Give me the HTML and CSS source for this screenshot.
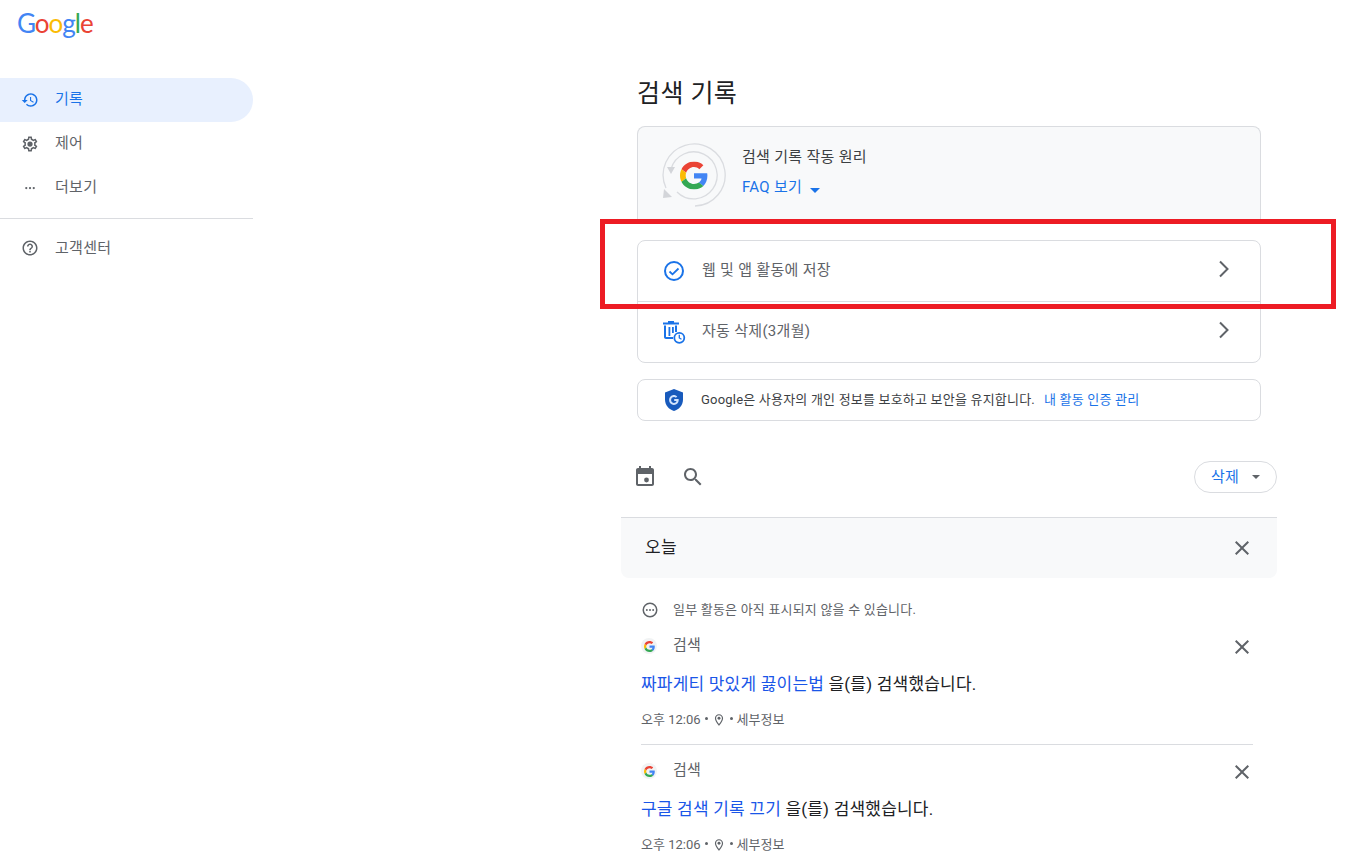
FILE: index.html
```html
<!DOCTYPE html>
<html lang="ko">
<head>
  <meta charset="UTF-8">
  <title>검색 기록</title>
  <link rel="stylesheet" href="styles.css">
</head>
<body>
  <svg class="defs" width="0" height="0">
    <symbol id="g-logo" viewBox="0 0 48 48">
      <path fill="#EA4335" d="M24 9.5c3.54 0 6.71 1.22 9.21 3.6l6.85-6.85C35.9 2.38 30.47 0 24 0 14.62 0 6.51 5.38 2.56 13.22l7.98 6.19C12.43 13.72 17.74 9.5 24 9.5z"/>
      <path fill="#4285F4" d="M46.98 24.55c0-1.57-.15-3.09-.38-4.55H24v9.02h12.94c-.58 2.96-2.26 5.48-4.78 7.18l7.73 6c4.51-4.18 7.09-10.36 7.09-17.65z"/>
      <path fill="#FBBC05" d="M10.53 28.59c-.48-1.45-.76-2.99-.76-4.59s.27-3.14.76-4.59l-7.98-6.19C.92 16.46 0 20.12 0 24c0 3.88.92 7.54 2.56 10.78l7.97-6.19z"/>
      <path fill="#34A853" d="M24 48c6.48 0 11.93-2.13 16.08-5.81l-7.73-6c-2.15 1.45-4.92 2.3-8.35 2.3-6.26 0-11.57-4.22-13.47-9.91l-7.98 6.19C6.51 42.62 14.62 48 24 48z"/>
    </symbol>
    <symbol id="close" viewBox="0 0 24 24">
      <path d="M19 6.41L17.59 5 12 10.59 6.41 5 5 6.41 10.59 12 5 17.59 6.41 19 12 13.41 17.59 19 19 17.59 13.41 12z"/>
    </symbol>
    <symbol id="chevron" viewBox="0 0 24 24">
      <path d="M8 4.500L15.500 12 8 19.500" fill="none" stroke="currentColor" stroke-width="2"/>
    </symbol>
    <symbol id="pin" viewBox="0 0 24 24">
      <path d="M12 2C8.100 2 5 5.100 5 9c0 5.200 7 13 7 13s7-7.800 7-13c0-3.900-3.100-7-7-7zm0 17c-2-2.600-5-7-5-10 0-2.800 2.200-5 5-5s5 2.200 5 5c0 2.900-2.900 7.400-5 10z"/>
      <circle cx="12" cy="9" r="2.500"/>
    </symbol>
  </svg>

  <div class="page">
    <aside class="side">
      <div class="logo"><span class="c-blue">G</span><span class="c-red">o</span><span class="c-yellow">o</span><span class="c-blue">g</span><span class="c-green">l</span><span class="c-red">e</span></div>
      <nav class="nav">
        <a class="nav-item active">
          <svg class="nav-icon" viewBox="0 0 24 24"><path d="M13 3c-4.970 0-9 4.030-9 9H1l3.890 3.890.07.14L9 12H6c0-3.870 3.130-7 7-7s7 3.130 7 7-3.130 7-7 7c-1.930 0-3.680-.79-4.940-2.060l-1.420 1.420C8.270 19.990 10.510 21 13 21c4.970 0 9-4.030 9-9s-4.030-9-9-9zm-1 5v5l4.280 2.540.72-1.210-3.500-2.080V8H12z"/></svg>
          <span class="nav-label">기록</span>
        </a>
        <a class="nav-item">
          <svg class="nav-icon" viewBox="0 0 24 24"><path d="M19.430 12.980c.04-.32.07-.64.07-.98 0-.34-.03-.66-.07-.98l2.110-1.650c.19-.15.24-.42.12-.64l-2-3.460c-.09-.16-.26-.25-.44-.25-.06 0-.12.01-.17.03l-2.490 1c-.52-.4-1.080-.73-1.690-.98l-.38-2.650C14.460 2.180 14.250 2 14 2h-4c-.25 0-.46.18-.49.42l-.38 2.650c-.61.25-1.170.59-1.690.98l-2.490-1c-.06-.02-.12-.03-.18-.03-.17 0-.34.09-.43.25l-2 3.460c-.13.22-.07.49.12.64l2.110 1.650c-.04.32-.07.65-.07.98 0 .33.03.66.07.98l-2.110 1.650c-.19.15-.24.42-.12.64l2 3.460c.09.16.26.25.44.25.06 0 .12-.01.17-.03l2.490-1c.52.4 1.080.73 1.690.98l.38 2.650c.03.24.24.42.49.42h4c.25 0 .46-.18.49-.42l.38-2.650c.61-.25 1.170-.59 1.690-.98l2.490 1c.06.02.12.03.18.03.17 0 .34-.09.43-.25l2-3.460c.12-.22.07-.49-.12-.64l-2.110-1.650zm-1.980-1.710c.04.31.05.52.05.73 0 .21-.02.43-.05.73l-.14 1.130.89.7 1.080.84-.7 1.210-1.270-.51-1.040-.42-.9.68c-.43.32-.84.56-1.250.73l-1.060.43-.16 1.130-.2 1.350h-1.400l-.19-1.350-.16-1.130-1.060-.43c-.43-.18-.83-.41-1.230-.71l-.91-.7-1.060.43-1.270.51-.7-1.210 1.080-.84.89-.7-.14-1.130c-.03-.31-.05-.54-.05-.74s.02-.43.05-.73l.14-1.130-.89-.7-1.080-.84.7-1.210 1.270.51 1.040.42.9-.68c.43-.32.84-.56 1.250-.73l1.060-.43.16-1.130.2-1.350h1.390l.19 1.350.16 1.130 1.060.43c.43.18.83.41 1.230.71l.91.7 1.060-.43 1.270-.51.7 1.210-1.070.85-.89.7.14 1.130z"/><circle cx="12" cy="12" r="3.500"/></svg>
          <span class="nav-label">제어</span>
        </a>
        <a class="nav-item">
          <svg class="nav-icon" viewBox="0 0 24 24"><circle cx="7" cy="12" r="1.500"/><circle cx="12" cy="12" r="1.500"/><circle cx="17" cy="12" r="1.500"/></svg>
          <span class="nav-label">더보기</span>
        </a>
        <div class="nav-line"></div>
        <a class="nav-item">
          <svg class="nav-icon" viewBox="0 0 24 24"><path d="M11 18h2v-2h-2v2zm1-16C6.480 2 2 6.480 2 12s4.480 10 10 10 10-4.480 10-10S17.520 2 12 2zm0 18c-4.410 0-8-3.590-8-8s3.590-8 8-8 8 3.590 8 8-3.590 8-8 8zm0-14c-2.210 0-4 1.790-4 4h2c0-1.100.9-2 2-2s2 .9 2 2c0 2-3 1.750-3 5h2c0-2.250 3-2.500 3-5 0-2.210-1.790-4-4-4z"/></svg>
          <span class="nav-label help-label">고객센터</span>
        </a>
      </nav>
    </aside>

    <main class="main">
      <h1 class="title">검색 기록</h1>

      <div class="cards">
        <section class="how">
          <svg class="how-icon" viewBox="0 0 66 66">
            <path d="M34 63A31 31 0 1 0 5 45" fill="none" stroke="#dadce0" stroke-width="1.300"/>
            <path d="M16 49A23.500 23.500 0 1 0 10 26" fill="none" stroke="#dadce0" stroke-width="1.300"/>
            <path d="M6 24h8l-4 7zM3 46l8 8-9 1z" fill="#d3d5d9"/>
            <use href="#g-logo" x="19" y="18.500" width="28" height="28"/>
          </svg>
          <div class="how-text">
            <div class="how-title">검색 기록 작동 원리</div>
            <div class="how-link">FAQ 보기 <span class="caret"></span></div>
          </div>
        </section>

        <section class="rows">
          <div class="row">
            <svg class="row-icon" viewBox="0 0 24 24"><circle cx="12" cy="12" r="9" fill="none" stroke="#1a73e8" stroke-width="2"/><path d="M7.500 12.500l3 2.800 6-5.800" fill="none" stroke="#1a73e8" stroke-width="1.800"/></svg>
            <span class="row-text">웹 및 앱 활동에 저장</span>
            <svg class="row-arrow"><use href="#chevron"/></svg>
          </div>
          <div class="row">
            <svg class="row-icon" viewBox="0 0 24 24">
              <path d="M6 1h6v1.500h5v2H1v-2h5zM2 5.500h2V17h7v2H4c-1.100 0-2-.9-2-2zM15 5.500h-2V12h2zM6.500 7H8.300v9H6.500zM10 7h1.800v6H10z" fill="#1a73e8"/>
              <circle cx="17.300" cy="17.800" r="5" fill="#fff" stroke="#1a73e8" stroke-width="1.800"/>
              <path d="M17.300 14.800v3.200l2.200 1.300" fill="none" stroke="#1a73e8" stroke-width="1.300"/>
            </svg>
            <span class="row-text">자동 삭제(3개월)</span>
            <svg class="row-arrow"><use href="#chevron"/></svg>
          </div>
        </section>

        <section class="safe">
          <svg class="safe-icon" viewBox="0 0 24 24">
            <path d="M12 1l9 3.500v7c0 5.500-3.800 10-9 11.500-5.200-1.500-9-6-9-11.500v-7z" fill="#185abc"/>
            <path d="M16.500 11h-4.300v2h2.300c-.3 1.200-1.300 1.900-2.500 1.900-1.600 0-2.900-1.300-2.900-2.900s1.300-2.900 2.900-2.900c.8 0 1.400.3 1.900.7l1.400-1.400C13.500 7.600 12.800 7.100 12 7.100c-2.700 0-4.900 2.200-4.900 4.900s2.200 4.900 4.900 4.900 4.700-2 4.700-4.700c0-.4 0-.8-.2-1.200z" fill="#d2e3fc"/>
          </svg>
          <span class="safe-text">Google은 사용자의 개인 정보를 보호하고 보안을 유지합니다.</span>
          <a class="safe-link">내 활동 인증 관리</a>
        </section>
      </div>

      <div class="tools">
        <svg class="tool-icon" viewBox="0 0 24 24"><path d="M19 3h-1V1h-2v2H8V1H6v2H5c-1.100 0-2 .9-2 2v14c0 1.100.9 2 2 2h14c1.100 0 2-.9 2-2V5c0-1.100-.9-2-2-2zm0 16H5V9h14z"/><path d="M5 5h14v3H5z"/><circle cx="13.500" cy="15" r="2.400"/></svg>
        <svg class="tool-icon" viewBox="0 0 24 24"><path d="M15.500 14h-.79l-.28-.27C15.410 12.590 16 11.110 16 9.500 16 5.910 13.090 3 9.500 3S3 5.910 3 9.500 5.910 16 9.500 16c1.610 0 3.090-.59 4.230-1.570l.27.28v.79l5 4.990L20.490 19l-4.990-5zm-6 0C7.010 14 5 11.990 5 9.500S7.010 5 9.500 5 14 7.010 14 9.500 11.990 14 9.500 14z"/></svg>
        <button class="del-btn"><span class="del-label">삭제</span><span class="del-caret"></span></button>
      </div>

      <div class="day">
        <span class="day-label">오늘</span>
        <svg class="x-icon"><use href="#close"/></svg>
      </div>

      <div class="notice">
        <svg class="notice-icon" viewBox="0 0 24 24"><circle cx="12" cy="12" r="9" fill="none" stroke="#5f6368" stroke-width="2"/><circle cx="7.800" cy="12" r="1.300"/><circle cx="12" cy="12" r="1.300"/><circle cx="16.200" cy="12" r="1.300"/></svg>
        <span class="notice-text">일부 활동은 아직 표시되지 않을 수 있습니다.</span>
      </div>

      <article class="item">
        <div class="item-head">
          <span class="g-badge"><svg class="g-small"><use href="#g-logo"/></svg></span>
          <span class="item-kind">검색</span>
          <svg class="x-icon"><use href="#close"/></svg>
        </div>
        <p class="item-body"><a class="item-link">짜파게티 맛있게 끓이는법</a> 을(를) 검색했습니다.</p>
        <div class="item-meta"><span>오후 12:06</span> <i class="dot"></i> <svg class="pin"><use href="#pin"/></svg> <i class="dot"></i> <span>세부정보</span></div>
      </article>

      <article class="item">
        <div class="item-head">
          <span class="g-badge"><svg class="g-small"><use href="#g-logo"/></svg></span>
          <span class="item-kind">검색</span>
          <svg class="x-icon"><use href="#close"/></svg>
        </div>
        <p class="item-body"><a class="item-link">구글 검색 기록 끄기</a> 을(를) 검색했습니다.</p>
        <div class="item-meta"><span>오후 12:06</span> <i class="dot"></i> <svg class="pin"><use href="#pin"/></svg> <i class="dot"></i> <span>세부정보</span></div>
      </article>
    </main>
  </div>

  <div class="mark"></div>
</body>
</html>
```

FILE: styles.css
```css
* {
  box-sizing: border-box;
}

html, body {
  height: 864px;
  overflow: hidden;
}

body {
  margin: 0;
  background: #fff;
  color: #202124;
  font-family: Roboto, "Noto Sans CJK KR", sans-serif;
  font-size: 15px;
  letter-spacing: 0.3px;
}

.defs {
  position: absolute;
}

.page {
  display: flex;
}

.side {
  width: 253px;
  flex: none;
}

.logo {
  height: 78px;
  padding: 6px 0 0 17px;
  font-family: Lato, sans-serif;
  font-size: 26px;
  line-height: 34px;
  letter-spacing: -1px;
}

.c-blue { color: #4285f4; }
.c-red { color: #ea4335; }
.c-yellow { color: #fbbc05; }
.c-green { color: #34a853; }

.nav-item {
  display: flex;
  align-items: center;
  gap: 16px;
  height: 44px;
  padding-left: 21px;
  color: #5f6368;
  border-radius: 0 22px 22px 0;
}

.nav-item.active {
  background: #e8f0fe;
  color: #1a73e8;
}

.nav-icon {
  width: 18px;
  height: 18px;
  fill: currentColor;
}

.nav-label {
  margin-bottom: 6px;
}

.help-label {
  margin-bottom: 4px;
}

.nav-line {
  height: 1px;
  margin: 8px 0 7px;
  background: #dadce0;
}

.main {
  width: 656px;
  margin-left: 368px;
}

.title {
  margin: 0;
  height: 126px;
  padding: 76px 0 0 16px;
  font-size: 25px;
  line-height: 36px;
  font-weight: 400;
  letter-spacing: 0.4px;
}

.cards {
  padding: 0 16px;
}

.how {
  display: flex;
  height: 96px;
  padding: 16px 0 0 23px;
  background: #f8f9fa;
  border: 1px solid #dadce0;
  border-bottom: 0;
  border-radius: 8px 8px 0 0;
}

.how-icon {
  width: 66px;
  height: 66px;
  flex: none;
}

.how-text {
  margin-left: 15px;
}

.how-title {
  margin-top: 3px;
  color: #3c4043;
  line-height: 22px;
}

.how-link {
  margin-top: 8px;
  color: #1a73e8;
  line-height: 22px;
}

.caret {
  display: inline-block;
  margin-left: 4px;
  border: 5px solid transparent;
  border-top: 5px solid #1a73e8;
  border-bottom: 0;
  vertical-align: -1px;
}

.rows {
  margin-top: 18px;
  border: 1px solid #dadce0;
  border-radius: 8px;
}

.row {
  display: flex;
  align-items: center;
  height: 60px;
  padding: 0 24px 0 24px;
  color: #5f6368;
}

.row + .row {
  height: 61px;
  border-top: 1px solid #dadce0;
}

.row-icon {
  width: 24px;
  height: 24px;
  flex: none;
}

.row-text {
  flex: 1;
  margin: 0 0 6px 16px;
}

.row-arrow {
  width: 24px;
  height: 24px;
  margin-bottom: 4px;
  color: #5f6368;
}

.safe {
  display: flex;
  align-items: center;
  height: 42px;
  margin-top: 16px;
  padding-left: 24px;
  border: 1px solid #dadce0;
  border-radius: 8px;
  font-size: 13px;
  letter-spacing: 0.2px;
  color: #3c4043;
}

.safe-icon {
  width: 24px;
  height: 24px;
  flex: none;
}

.safe-text {
  margin: 0 0 3px 15px;
}

.safe-link {
  margin: 0 0 3px 9px;
  color: #1a73e8;
}

.tools {
  display: flex;
  align-items: center;
  height: 32px;
  margin-top: 40px;
  padding-left: 12px;
}

.tool-icon {
  width: 24px;
  height: 24px;
  fill: #5f6368;
  margin-right: 24px;
}

.del-btn {
  display: flex;
  align-items: center;
  margin-left: auto;
  width: 83px;
  height: 32px;
  padding: 0 0 0 16px;
  border: 1px solid #dadce0;
  border-radius: 16px;
  background: #fff;
  color: #1a73e8;
  font: inherit;
  letter-spacing: inherit;
}

.del-label {
  margin-bottom: 3px;
}

.del-caret {
  margin-left: 13px;
  border: 4px solid transparent;
  border-top: 4px solid #5f6368;
  border-bottom: 0;
}

.day {
  display: flex;
  align-items: center;
  justify-content: space-between;
  height: 61px;
  margin-top: 24px;
  padding: 0 23px 0 24px;
  background: #f8f9fa;
  border-top: 1px solid #dadce0;
  border-radius: 0 0 8px 8px;
  font-size: 17px;
}

.day-label {
  margin-bottom: 5px;
}

.x-icon {
  width: 24px;
  height: 24px;
  fill: #5f6368;
  flex: none;
}

.notice {
  display: flex;
  align-items: center;
  gap: 14px;
  height: 20px;
  margin-top: 22px;
  padding-left: 20px;
  font-size: 13px;
  letter-spacing: 0.2px;
  color: #5f6368;
}

.notice-icon {
  width: 18px;
  height: 18px;
  fill: #5f6368;
}

.notice-text {
  margin-bottom: 3px;
}

.item {
  margin: 0 24px 0 20px;
  padding-top: 15px;
  height: 125px;
  border-bottom: 1px solid #dadce0;
}

.item:last-child {
  border-bottom: 0;
}

.item-head {
  display: flex;
  align-items: center;
  height: 24px;
  color: #5f6368;
}

.item-head .x-icon {
  margin: 0 -1px 0 auto;
}

.g-badge {
  display: flex;
  align-items: center;
  justify-content: center;
  width: 16px;
  height: 16px;
  margin-bottom: 2px;
  border-radius: 50%;
  background: #f1f3f4;
}

.g-small {
  width: 11px;
  height: 11px;
}

.item-kind {
  margin: 0 0 8px 16px;
}

.item-body {
  margin: 13px 0 0;
  font-size: 17px;
  line-height: 24px;
  letter-spacing: 0.2px;
  color: #202124;
}

.item-link {
  color: #1a56e8;
}

.item-meta {
  display: flex;
  align-items: center;
  gap: 4px;
  height: 20px;
  margin-top: 12px;
  font-size: 13px;
  letter-spacing: 0;
  color: #5f6368;
}

.dot {
  width: 3px;
  height: 3px;
  border-radius: 50%;
  background: #5f6368;
}

.pin {
  width: 14px;
  height: 14px;
  margin-top: 3px;
  fill: #5f6368;
}

/* red box drawn over the screenshot */
.mark {
  position: absolute;
  left: 600px;
  top: 219px;
  width: 736px;
  height: 90px;
  border: 5px solid #ed1c24;
}
```
